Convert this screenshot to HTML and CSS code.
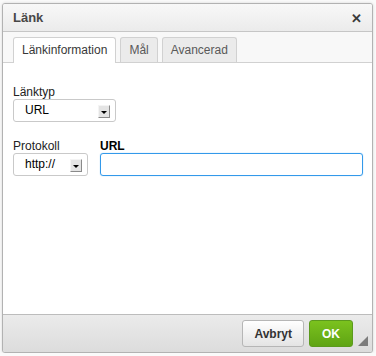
FILE: index.html
```html
<!DOCTYPE html>
<html lang="sv">
<head>
  <meta charset="UTF-8">
  <title>Länk</title>
  <link rel="stylesheet" href="styles.css">
</head>
<body>
  <div class="dialog">
    <div class="title">
      <span>Länk</span>
      <span class="close">&#x2715;</span>
    </div>
    <div class="tabs">
      <div class="tab active">Länkinformation</div>
      <div class="tab">Mål</div>
      <div class="tab">Avancerad</div>
    </div>
    <div class="contents">
      <div class="field">
        <label>Länktyp</label>
        <div class="select wide">URL<span class="arrow"></span></div>
      </div>
      <div class="row">
        <div class="field">
          <label>Protokoll</label>
          <div class="select narrow">http://<span class="arrow"></span></div>
        </div>
        <div class="field grow">
          <label class="bold">URL</label>
          <div class="input"></div>
        </div>
      </div>
    </div>
    <div class="footer">
      <button class="btn">Avbryt</button>
      <button class="btn ok">OK</button>
      <span class="resize"></span>
    </div>
  </div>
</body>
</html>
```

FILE: styles.css
```css
body {
  margin: 0;
  padding: 3px 0 0 2px;
  background: #fafafa;
  font-family: "Liberation Sans", Arial, sans-serif;
  font-size: 12px;
  color: #222;
}
.dialog {
  width: 369px;
  height: 348px;
  border: 1px solid #b2b2b2;
  border-radius: 3px;
  background: #f8f8f8;
  box-shadow: 0 0 3px rgba(0, 0, 0, 0.15);
  display: flex;
  flex-direction: column;
  overflow: hidden;
}
.title {
  height: 27px;
  padding: 0 10px 0 10px;
  display: flex;
  align-items: center;
  justify-content: space-between;
  font-size: 13px;
  font-weight: bold;
  color: #474747;
  background: linear-gradient(#f8f8f8, #ebebeb);
  border-bottom: 1px solid #c6c6c6;
}
.close {
  font-size: 13px;
  font-weight: bold;
  color: #3a3a3a;
  margin-top: 1px;
}
.tabs {
  display: flex;
  gap: 4px;
  padding: 5px 0 0 10px;
  border-bottom: 1px solid #d1d1d1;
  background: #f8f8f8;
}
.tab {
  height: 24px;
  line-height: 24px;
  padding: 0 8px;
  border: 1px solid #d1d1d1;
  border-bottom: none;
  border-radius: 3px 3px 0 0;
  background: #ebebeb;
  color: #595959;
}
.tab.active {
  background: #fff;
  color: #383838;
  margin-bottom: -1px;
  height: 25px;
}
.contents {
  flex: 1;
  background: #fff;
  padding: 22px 9px 0 10px;
}
.field label {
  display: block;
  line-height: 14px;
  color: #222;
}
.field label.bold {
  font-weight: bold;
  color: #000;
}
.row {
  display: flex;
  gap: 12px;
  margin-top: 17px;
}
.grow {
  flex: 1;
}
.select {
  position: relative;
  height: 21px;
  line-height: 21px;
  border: 1px solid #c9c9c9;
  border-radius: 3px;
  padding-left: 11px;
  background: #fff;
  color: #000;
}
.select.wide {
  width: 90px;
}
.select.narrow {
  width: 62px;
}
.arrow {
  position: absolute;
  right: 5px;
  top: 5px;
  width: 10px;
  height: 11px;
  background: #e4e4e4;
  border-top: 1px solid #f4f4f4;
  border-left: 1px solid #f4f4f4;
  border-right: 1px solid #8a8a8a;
  border-bottom: 1px solid #8a8a8a;
}
.arrow::after {
  content: "";
  position: absolute;
  left: 2px;
  top: 5px;
  border-left: 3px solid transparent;
  border-right: 3px solid transparent;
  border-top: 3px solid #000;
}
.input {
  height: 21px;
  border: 1px solid #3399ea;
  border-radius: 3px;
  box-shadow: 0 0 1px #6ab6f5;
}
.footer {
  height: 37px;
  position: relative;
  display: flex;
  justify-content: flex-end;
  align-items: center;
  gap: 5px;
  padding-right: 19px;
  border-top: 1px solid #bcbcbc;
  background: linear-gradient(#ebebeb, #dcdcdc);
}
.btn {
  height: 27px;
  padding: 0 11px;
  border: 1px solid #b6b6b6;
  border-radius: 3px;
  background: linear-gradient(#fff, #e4e4e4);
  font-family: "Liberation Sans", Arial, sans-serif;
  font-size: 12px;
  font-weight: bold;
  color: #333;
}
.btn.ok {
  padding: 0 12px;
  border-color: #5b9a1d;
  background: linear-gradient(#7bc21e, #5fa414);
  color: #fff;
}
.resize {
  position: absolute;
  right: 4px;
  bottom: 6px;
  width: 0;
  height: 0;
  border-left: 10px solid transparent;
  border-bottom: 10px solid #7c7c7c;
}
```
